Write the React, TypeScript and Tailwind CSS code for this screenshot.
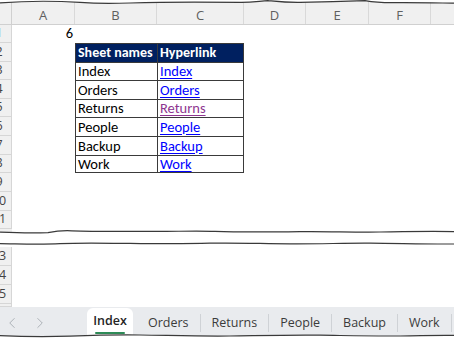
import { ChevronLeft, ChevronRight } from "lucide-react";

const cellFont = "font-['Carlito','Lato','Liberation_Sans',sans-serif]";
const uiFont = "font-['Open_Sans','Noto_Sans',sans-serif]";

const colWidths = ["w-[63px]", "w-[82px]", "w-[87px]", "w-[62px]", "w-[63px]", "w-[62px]"];
const colLabels = ["A", "B", "C", "D", "E", "F"];

const upperHeights = [
  "h-[18px]", "h-[19px]", "h-[18px]", "h-[19px]", "h-[18px]", "h-[19px]",
  "h-[19px]", "h-[18px]", "h-[19px]", "h-[19px]", "h-[18px]",
];

const sheets = [
  { name: "Index", visited: false },
  { name: "Orders", visited: false },
  { name: "Returns", visited: true },
  { name: "People", visited: false },
  { name: "Backup", visited: false },
  { name: "Work", visited: false },
];

const tabs = ["Orders", "Returns", "People", "Backup", "Work"];

function RowHead({ n }: { n?: number }) {
  return (
    <div className="w-[12px] shrink-0 overflow-hidden bg-[#f0f0f0] border-r border-b border-[#d6d6d6] flex items-center">
      {n !== undefined && (
        <div className={`w-[26px] ml-[-14px] shrink-0 text-center text-[12.5px] text-[#444] ${uiFont}`}>{n}</div>
      )}
    </div>
  );
}

function Row({ n, h, children }: { n?: number; h: string; children?: React.ReactNode }) {
  return (
    <div className={`flex ${h}`}>
      <RowHead n={n} />
      {children}
    </div>
  );
}

function TableRow({ left, right, head, last, visited }: { left: string; right: string; head?: boolean; last?: boolean; visited?: boolean }) {
  const base = `shrink-0 whitespace-nowrap overflow-hidden border-t border-l border-[#3a3a3a] flex items-center px-[2px] leading-none ${last ? "border-b" : ""}`;
  if (head) {
    return (
      <>
        <div className={`${colWidths[1]} ${base} text-[14px] bg-[#002060] text-white font-bold`}>{left}</div>
        <div className={`${colWidths[2]} ${base} text-[14px] border-r bg-[#002060] text-white font-bold`}>{right}</div>
      </>
    );
  }
  return (
    <>
      <div className={`${colWidths[1]} ${base} text-[14.5px] text-black`}>{left}</div>
      <div className={`${colWidths[2]} ${base} text-[14.5px] border-r`}>
        <span className={`underline underline-offset-2 ${visited ? "text-[#8e3590]" : "text-[#0000ff]"}`}>{right}</span>
      </div>
    </>
  );
}

export default function App() {
  return (
    <div className={`relative w-[454px] h-[341px] overflow-hidden bg-white flex flex-col ${cellFont}`}>
      {/* column header */}
      <div className="flex h-[25px] bg-[#f0f0f0] border-b border-[#d0d0d0]">
        <div className="w-[12px] shrink-0 border-r border-[#d0d0d0]" />
        {colLabels.map((c, i) => (
          <div key={c} className={`${colWidths[i]} shrink-0 border-r border-[#d9d9d9] flex items-end justify-center text-[13px] leading-[17px] text-[#5f5f5f] ${uiFont}`}>
            {c}
          </div>
        ))}
        <div className="flex-1" />
      </div>

      {/* upper piece rows 1-11 */}
      {upperHeights.map((h, idx) => {
        const n = idx + 1;
        let content: React.ReactNode = null;
        if (n === 1) {
          content = (
            <div className={`${colWidths[0]} flex items-center justify-end pr-[2px] text-[14.5px] text-black`}>6</div>
          );
        } else if (n >= 2 && n <= 8) {
          const s = n === 2 ? null : sheets[n - 3];
          content = (
            <>
              <div className={`${colWidths[0]} shrink-0`} />
              {s ? (
                <TableRow left={s.name} right={s.name} visited={s.visited} last={n === 8} />
              ) : (
                <TableRow left="Sheet names" right="Hyperlink" head />
              )}
            </>
          );
        }
        return (
          <Row key={n} n={n} h={h}>
            {content}
          </Row>
        );
      })}

      {/* torn break */}
      <svg className="h-[18px] w-[454px] shrink-0" viewBox="0 0 454 18" preserveAspectRatio="none">
        <path d="M0,0 L12,0 L12,3.6 L0,3.2 Z" fill="#f0f0f0" />
        <path
          d="M0,3.2 C15,3.8 35,4.2 48,3.6 C55,2.2 60,1.2 72,1.8 C95,2.6 120,2.2 150,2.4 C175,2.6 195,1.6 215,2.4 C240,3.2 270,3 300,2.6 C330,2.2 350,3.4 380,3 C405,2.6 430,2 454,2.6"
          fill="none" stroke="#3a3a3a" strokeWidth="1.2"
        />
        <path
          d="M0,14.6 C20,14.8 40,15.6 60,14.6 C80,13.6 100,14 130,14.4 C160,14.8 190,14.8 210,14.2 C235,13.6 260,14.6 290,14.8 C320,15 345,14 370,14.2 C400,14.4 425,15.2 454,15"
          fill="none" stroke="#3a3a3a" strokeWidth="1.2"
        />
      </svg>

      {/* lower piece rows 13-16 */}
      <Row n={13} h="h-[19px]" />
      <Row n={14} h="h-[19px]" />
      <Row n={15} h="h-[19px]" />
      <Row h="h-[3px]" />

      {/* sheet tab bar */}
      <div className={`flex h-[34px] bg-[#e9ebee] ${uiFont}`}>
        <div className="w-[87px] shrink-0 flex items-center text-[#a6abb1] pb-[3px]">
          <ChevronLeft size={18} strokeWidth={1.2} className="ml-[3px]" />
          <ChevronRight size={18} strokeWidth={1.2} className="ml-[10px]" />
        </div>
        <div className="w-[46px] shrink-0 mt-[1px] bg-white rounded-t-[6px] flex flex-col items-center pt-[5px]">
          <span className="text-[12.5px] leading-[16px] font-semibold text-[#242424]">Index</span>
          <span className="mt-[3px] h-[2px] w-[30px] rounded bg-[#2e8b57]" />
        </div>
        <div className="w-[4px] shrink-0" />
        {tabs.map((t) => (
          <div key={t} className="flex items-start pt-[7px]">
            <span className="px-[11px] text-[12.5px] leading-[18px] text-[#3b3b3b]">{t}</span>
            <span className="w-px h-[18px] bg-[#cfd2d6]" />
          </div>
        ))}
      </div>

      {/* torn top edge */}
      <svg className="absolute left-0 top-0 w-[454px] h-[7px]" viewBox="0 0 454 7" preserveAspectRatio="none">
        <path
          d="M0,2.8 C25,1 55,0.8 80,2.4 C95,3.6 110,3.8 130,3 C160,2 200,1.8 240,2.4 C252,2.6 260,1 268,0.6 C276,1.4 285,2.6 300,2.4 C325,2 350,1.2 365,0.6 C372,1.8 380,2.8 395,2.6 C420,2.4 440,3 454,3.2 L454,0 L0,0 Z"
          fill="#ffffff"
        />
        <path
          d="M0,2.8 C25,1 55,0.8 80,2.4 C95,3.6 110,3.8 130,3 C160,2 200,1.8 240,2.4 C252,2.6 260,1 268,0.6 C276,1.4 285,2.6 300,2.4 C325,2 350,1.2 365,0.6 C372,1.8 380,2.8 395,2.6 C420,2.4 440,3 454,3.2"
          fill="none" stroke="#3a3a3a" strokeWidth="1.2"
        />
      </svg>

      {/* torn bottom edge */}
      <svg className="absolute left-0 bottom-0 w-[454px] h-[9px]" viewBox="0 0 454 9" preserveAspectRatio="none">
        <path
          d="M0,3.6 C20,4.6 45,5 70,4.2 C90,3.4 110,2.6 140,3 C170,3.4 200,4.4 230,4 C260,3.6 290,2.8 320,3.2 C350,3.6 380,4.4 410,3.8 C430,3.4 445,3.2 454,3.4 L454,9 L0,9 Z"
          fill="#ffffff"
        />
        <path
          d="M0,3.6 C20,4.6 45,5 70,4.2 C90,3.4 110,2.6 140,3 C170,3.4 200,4.4 230,4 C260,3.6 290,2.8 320,3.2 C350,3.6 380,4.4 410,3.8 C430,3.4 445,3.2 454,3.4"
          fill="none" stroke="#3a3a3a" strokeWidth="1.2"
        />
      </svg>
    </div>
  );
}
